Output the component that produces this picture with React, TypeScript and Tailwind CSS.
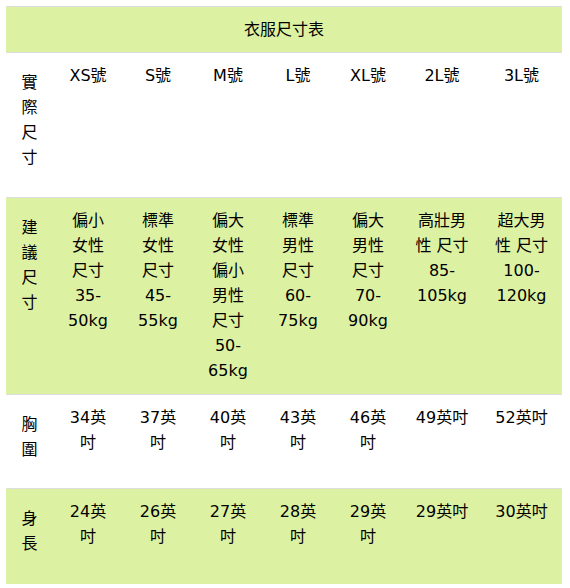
const sizes = ["XS號", "S號", "M號", "L號", "XL號", "2L號", "3L號"];

const suggested = [
  ["偏小", "女性", "尺寸", "35-", "50kg"],
  ["標準", "女性", "尺寸", "45-", "55kg"],
  ["偏大", "女性", "偏小", "男性", "尺寸", "50-", "65kg"],
  ["標準", "男性", "尺寸", "60-", "75kg"],
  ["偏大", "男性", "尺寸", "70-", "90kg"],
  ["高壯男", "性 尺寸", "85-", "105kg"],
  ["超大男", "性 尺寸", "100-", "120kg"],
];

const chest = [
  ["34英", "吋"],
  ["37英", "吋"],
  ["40英", "吋"],
  ["43英", "吋"],
  ["46英", "吋"],
  ["49英吋"],
  ["52英吋"],
];

const length = [
  ["24英", "吋"],
  ["26英", "吋"],
  ["27英", "吋"],
  ["28英", "吋"],
  ["29英", "吋"],
  ["29英吋"],
  ["30英吋"],
];

type Row = {
  label: string[];
  cells: string[][];
  green: boolean;
  height: string;
};

const rows: Row[] = [
  { label: ["實", "際", "尺", "寸"], cells: sizes.map((s) => [s]), green: false, height: "h-[145px]" },
  { label: ["建", "議", "尺", "寸"], cells: suggested, green: true, height: "h-[197px]" },
  { label: ["胸", "圍"], cells: chest, green: false, height: "h-[94px]" },
  { label: ["身", "長"], cells: length, green: true, height: "h-[96px]" },
];

function Lines({ lines }: { lines: string[] }) {
  return (
    <>
      {lines.map((line, i) => (
        <div key={i} className="whitespace-pre">
          {line}
        </div>
      ))}
    </>
  );
}

export default function App() {
  return (
    <div className="min-h-[588px] bg-white pt-[6px] pl-[6px] font-['DejaVu_Sans','Noto_Sans_CJK_TC',sans-serif] text-[16px] leading-[25px] text-black">
      <div className="w-[556px]">
        <div className="flex h-[46px] items-center justify-center border-t border-[#dddddd] bg-[#ddf1a3]">
          衣服尺寸表
        </div>
        {rows.map((row, r) => (
          <div
            key={r}
            className={`grid grid-cols-[47px_70px_70px_70px_70px_70px_78px_81px] border-t border-[#dddddd] ${row.height} ${
              row.green ? "bg-[#ddf1a3]" : "bg-white"
            }`}
          >
            <div className="pt-[17px] text-center">
              <Lines lines={row.label} />
            </div>
            {row.cells.map((cell, c) => (
              <div key={c} className="pt-[10px] text-center">
                <Lines lines={cell} />
              </div>
            ))}
          </div>
        ))}
      </div>
    </div>
  );
}
